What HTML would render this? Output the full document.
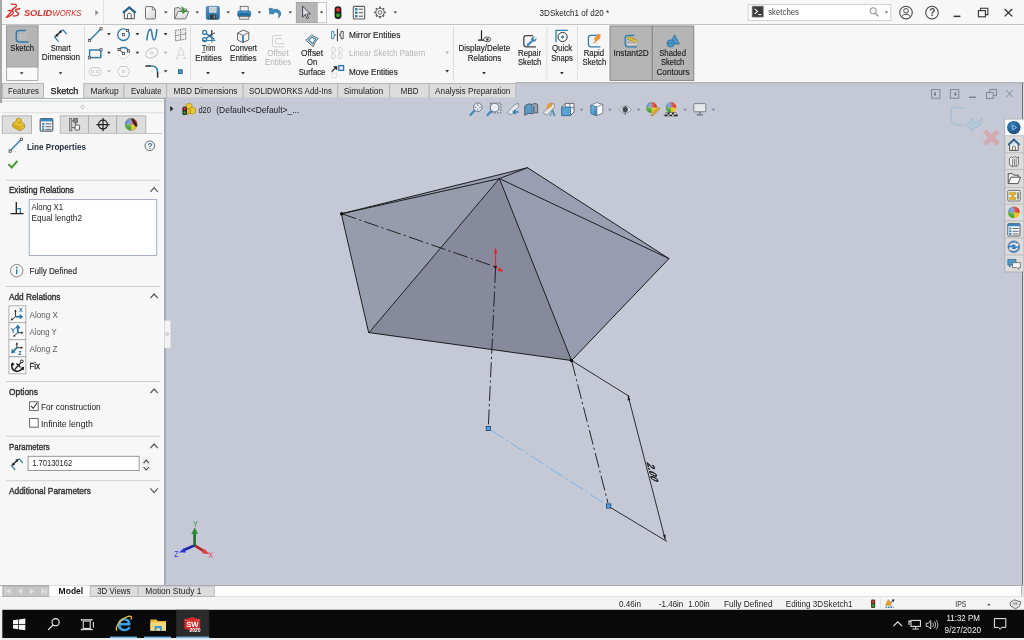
<!DOCTYPE html>
<html lang="en">
<head>
<meta charset="utf-8">
<title>SOLIDWORKS - 3DSketch1 of d20</title>
<style>
*{box-sizing:border-box;margin:0;padding:0}
html,body{width:1024px;height:640px;overflow:hidden;background:#f7f7f7}
body{font-family:"Liberation Sans",sans-serif;font-size:9px;color:#222;position:relative}
.abs{position:absolute}
svg{will-change:transform}
.t{position:absolute;white-space:nowrap;line-height:11px;font-size:9px;color:#222}
.c{text-align:center}
.dis{color:#b4b4b4}
#titlebar{left:0;top:0;width:1024px;height:24px;background:#f7f7f7}
#ribbon{left:0;top:25px;width:1024px;height:57px;background:#f7f7f7}
#tabs{left:0;top:82px;width:1024px;height:16px;background:#c5c9d5}
.tab{position:absolute;top:1px;height:15px;background:#dddddd;border:1px solid #b9b9b9;border-bottom:none;font-size:9.5px;line-height:14px;text-align:center;color:#222;white-space:nowrap}
.tab.on{background:#f7f7f7;border-color:#f7f7f7;top:0;height:16px}
#left{left:0;top:98px;width:164.3px;height:487px;background:#f7f7f7}
#view{left:165.6px;top:98px;width:858.4px;height:487px;background:#c5c9d5}
#btabs{left:0;top:585px;width:1024px;height:12px;background:#f5f5f5}
#status{left:0;top:597px;width:1024px;height:13px;background:#f5f5f5}
#taskbar{left:0;top:610px;width:1024px;height:30px;background:#0b0b0b}
.sep{position:absolute;height:1px;background:#d0d0d0;left:6px;width:154px}
.sec{position:absolute;left:9px;font-size:9px;line-height:11px;color:#222;white-space:nowrap;-webkit-text-stroke:0.25px #222}
.chev{position:absolute;left:149px;width:9px;height:6px}
</style>
</head>
<body>
<!-- ======= TITLE BAR ======= -->
<div id="titlebar" class="abs"></div>
<svg class="abs" style="left:0;top:0.4px" width="1024" height="25" viewBox="0 0 1024 25">
<defs>
<linearGradient id="gDoc" x1="0" y1="0" x2="1" y2="1"><stop offset="0" stop-color="#ffffff"/><stop offset="1" stop-color="#d4d4d4"/></linearGradient>
<linearGradient id="gBlue" x1="0" y1="0" x2="0" y2="1"><stop offset="0" stop-color="#4a9acb"/><stop offset="1" stop-color="#226a9c"/></linearGradient>
</defs>
<style>
.s{font-family:"Liberation Sans",sans-serif;font-size:9.3px;fill:#222}
.ar{fill:#333}
</style>
<!-- DS logo -->
<g fill="none" stroke="#da2f2a" stroke-linecap="round" stroke-linejoin="round">
<path d="M11.2,4.1 L15.2,4.3 C17.2,4.7 16.6,6.9 14.6,7.9 L12.4,9.1" stroke-width="1.3"/>
<path d="M13.2,9.6 L6.2,17.4 M8.2,10.7 C12,10 14.2,11.4 13,13.4 C11.6,15.4 8.8,16.8 6.2,17.4" stroke-width="1.3"/>
<path d="M19.8,8.8 L16.8,9.2 C15,9.8 15.4,11.3 16.8,11.9 C18.8,12.7 19.2,14.6 17.2,15.4 C16,15.8 14.8,16 13.6,16" stroke-width="1.5"/>
</g>
<text y="16.1" font-family="Liberation Sans, sans-serif" font-size="9.2" font-style="italic" fill="#da2f2a"><tspan x="23.9" textLength="28.3" lengthAdjust="spacingAndGlyphs" font-weight="bold">SOLID</tspan><tspan x="52.4" textLength="29" lengthAdjust="spacingAndGlyphs">WORKS</tspan></text>
<path d="M95.3,9.8 L98.7,12.7 L95.3,15.6 Z" fill="#8c8c8c"/>
<rect x="103" y="0" width="1" height="24" fill="#e3e3e3"/>
<!-- home -->
<path d="M124.3,12.6 L124.3,18.7 L134.3,18.7 L134.3,12.6" fill="#fafafa" stroke="#4a4a4a" stroke-width="1"/>
<path d="M127.4,18.7 L127.4,14.4 C127.4,13 131.2,13 131.2,14.4 L131.2,18.7" fill="none" stroke="#4a4a4a" stroke-width="0.9"/>
<path d="M122.9,12.8 L129.3,7.4 L135.7,12.8" fill="none" stroke="#27638f" stroke-width="2.3" stroke-linejoin="miter"/>
<!-- new doc -->
<path d="M146.6,6.6 L152.6,6.6 L155.5,9.6 L155.5,17.8 Q155.5,19 154.3,19 L146.6,19 Q145.5,19 145.5,17.8 L145.5,7.8 Q145.5,6.6 146.6,6.6 Z" fill="url(#gDoc)" stroke="#6e6e6e" stroke-width="1"/>
<path d="M152.4,6.8 L152.4,9.8 L155.4,9.8" fill="none" stroke="#6e6e6e" stroke-width="0.8"/>
<path class="ar" d="M164,11.4 L167.6,11.4 L165.8,13.6 Z"/>
<!-- open -->
<path d="M174.6,18.8 L174.6,8.2 L179,7.4 L180.2,9 L186.5,9 L186.5,11.6" fill="#dcdcdc" stroke="#6a6a6a" stroke-width="0.9"/>
<path d="M174.8,18.9 L178.2,11.4 L188.8,11.4 L185.6,18.9 Z" fill="url(#gDoc)" stroke="#6a6a6a" stroke-width="0.9"/>
<path d="M180.6,6.2 C183,6.4 184.4,8 184.4,10.2 L186.6,10.2 L183.4,14 L180.2,10.2 L182.4,10.2 C182.4,8.6 181.8,7.4 180.6,6.2 Z" fill="#2f9a2a"/>
<path class="ar" d="M195.4,11.4 L199,11.4 L197.2,13.6 Z"/>
<!-- save -->
<rect x="206.3" y="6.4" width="13" height="13" rx="1.4" fill="url(#gBlue)" stroke="#1f5f8c" stroke-width="0.6"/>
<rect x="209" y="6.9" width="7.6" height="5.8" fill="#d9dde0"/>
<path d="M209,8.8 H216.6 M209,10.6 H216.6" stroke="#aab0b5" stroke-width="0.6"/>
<rect x="210" y="14.6" width="6" height="4.6" fill="#3b3b3b"/>
<rect x="213.6" y="15.4" width="1.5" height="3" fill="#8b8b8b"/>
<path class="ar" d="M226.4,11.4 L230,11.4 L228.2,13.6 Z"/>
<!-- print -->
<rect x="240.2" y="6.4" width="8" height="5.2" fill="#f1f1f1" stroke="#6a6a6a" stroke-width="0.9"/>
<rect x="237.7" y="10.8" width="13" height="6" rx="1.6" fill="url(#gBlue)" stroke="#1f5f8c" stroke-width="0.5"/>
<rect x="239" y="13.6" width="10.4" height="1" fill="#1b557f"/>
<rect x="239.6" y="16.4" width="9.2" height="2.8" fill="#e2e2e2" stroke="#6a6a6a" stroke-width="0.8"/>
<path class="ar" d="M257.6,11.4 L261.2,11.4 L259.4,13.6 Z"/>
<!-- undo -->
<path d="M269.2,8.2 L272.6,8.6 L271.8,10 C275.6,8 281.2,9.6 280.8,14.2 C280.6,16 279.6,17 278.2,17.8 C279.4,15.6 279,12.4 275.4,12.2 C274.4,12.2 273.6,12.4 273,12.8 L274.2,14 L269.6,13.8 Z" fill="#3a8cc0" stroke="#1f5f8c" stroke-width="0.5" stroke-linejoin="round"/>
<path class="ar" d="M288.5,11.4 L292.1,11.4 L290.3,13.6 Z"/>
<!-- select -->
<rect x="296.3" y="2.5" width="21.2" height="20.2" fill="#b5b5b5" stroke="#9a9a9a" stroke-width="0.8"/>
<rect x="317.5" y="2.5" width="9" height="20.2" fill="#fafafa" stroke="#bdbdbd" stroke-width="0.8"/>
<path d="M302.6,6.2 L302.6,17 L305.2,14.6 L307,18.6 L308.6,17.9 L306.8,14 L310.4,13.8 Z" fill="#d8d8d8" stroke="#3c3c48" stroke-width="0.9" stroke-linejoin="round"/>
<path class="ar" d="M319.8,11.4 L323.4,11.4 L321.6,13.6 Z"/>
<!-- traffic light -->
<rect x="334.6" y="6.2" width="6.8" height="12.8" rx="3.2" fill="#1e1e1e"/>
<circle cx="338" cy="9.8" r="2" fill="#e2302a"/>
<circle cx="338" cy="15.3" r="2" fill="#2fa32a"/>
<!-- options list -->
<rect x="353.3" y="6.4" width="11.4" height="12.6" rx="1" fill="#f2f2f2" stroke="#5e5e5e" stroke-width="1.1"/>
<rect x="355" y="8" width="2.4" height="2.4" fill="#2f7fb3"/><rect x="355" y="11.5" width="2.4" height="2.4" fill="#2f7fb3"/><rect x="355" y="15" width="2.4" height="2.4" fill="#2f7fb3"/>
<path d="M358.6,9.2 H363 M358.6,12.7 H363 M358.6,16.2 H363" stroke="#5e5e5e" stroke-width="1"/>
<!-- gear -->
<circle cx="380" cy="12.4" r="4.2" fill="none" stroke="#5a5a5a" stroke-width="1"/>
<circle cx="380" cy="12.4" r="1.8" fill="none" stroke="#5a5a5a" stroke-width="0.9"/>
<g stroke="#606060" stroke-width="1.8"><path d="M380,6.6 V8.2 M380,16.6 V18.2 M374.2,12.4 H375.8 M384.2,12.4 H385.8 M375.9,8.3 L377,9.4 M383,15.4 L384.1,16.5 M384.1,8.3 L383,9.4 M377,15.4 L375.9,16.5"/></g>
<path class="ar" d="M393.5,11.4 L397.1,11.4 L395.3,13.6 Z"/>
<!-- title -->
<text class="s" x="539.6" y="16" textLength="69.6" lengthAdjust="spacingAndGlyphs" style="font-size:9.2px">3DSketch1 of d20 *</text>
<!-- search -->
<rect x="748.2" y="4.6" width="142.6" height="15.8" fill="#ffffff" stroke="#c9c9d2" stroke-width="0.9"/>
<rect x="752.2" y="6.2" width="11" height="10.8" fill="#3a3a3a" stroke="#777" stroke-width="0.8"/>
<path d="M754.6,8.8 L757.6,11.4 L754.6,14" fill="none" stroke="#fff" stroke-width="1.1"/>
<path d="M758.2,14.6 H761.4" stroke="#fff" stroke-width="1"/>
<text class="s" x="768.2" y="15.2" textLength="30.8" lengthAdjust="spacingAndGlyphs" style="fill:#444">sketches</text>
<circle cx="873.2" cy="10.8" r="3.1" fill="none" stroke="#8a8a8a" stroke-width="1"/>
<path d="M875.4,13.2 L878.4,16.4" stroke="#8a8a8a" stroke-width="1.3"/>
<path d="M884.6,11.6 L888.2,11.6 L886.4,13.6 Z" fill="#666"/>
<!-- user -->
<circle cx="906" cy="12.6" r="6.3" fill="none" stroke="#4a4a4a" stroke-width="1.1"/>
<circle cx="906" cy="10.8" r="2.3" fill="none" stroke="#4a4a4a" stroke-width="1"/>
<path d="M901.8,16.6 C902.6,13.6 909.4,13.6 910.2,16.6" fill="none" stroke="#4a4a4a" stroke-width="1"/>
<!-- help -->
<circle cx="932" cy="12.6" r="6.3" fill="none" stroke="#4a4a4a" stroke-width="1.1"/>
<text x="929.3" y="16.2" font-family="Liberation Sans, sans-serif" font-size="10" font-weight="bold" fill="#4a4a4a">?</text>
<!-- window buttons -->
<rect x="953.6" y="15.6" width="6.8" height="1.5" fill="#333"/>
<rect x="978.4" y="10.6" width="7" height="6.2" fill="none" stroke="#333" stroke-width="1.1"/>
<path d="M980.6,10.4 V8.2 H987.8 V14.6 H985.6" fill="none" stroke="#333" stroke-width="1.1"/>
<path d="M1004.6,9 L1012.2,16.4 M1012.2,9 L1004.6,16.4" stroke="#333" stroke-width="1.3"/>
</svg>
<div class="abs" style="left:0;top:23.8px;width:1024px;height:1.2px;background:#c4c4c4"></div>
<!-- ======= RIBBON ======= -->
<div id="ribbon" class="abs"></div>
<svg class="abs" style="left:0;top:24px" width="1024" height="58" viewBox="0 24 1024 58">
<style>
.r{font-family:"Liberation Sans",sans-serif;font-size:8.6px;fill:#1e1e1e;stroke:#1e1e1e;stroke-width:0.15px;transform:translateY(0.4px)}
.rd{font-family:"Liberation Sans",sans-serif;font-size:8.6px;fill:#b4b4b4;transform:translateY(0.4px)}
.ag{fill:#b0b0b0}
.vs{fill:#dedede}
</style>
<rect class="vs" x="84.0" y="26" width="1" height="54"/>
<rect class="vs" x="190.0" y="26" width="1" height="54"/>
<rect class="vs" x="453.0" y="26" width="1" height="54"/>
<rect class="vs" x="546.3" y="26" width="1" height="54"/>
<rect class="vs" x="577.0" y="26" width="1" height="54"/>
<rect x="6.6" y="26" width="31.3" height="54.4" fill="#fafafa" stroke="#a2a2a2" stroke-width="0.9"/>
<rect x="6.6" y="26" width="31.3" height="41" fill="#b5b5b5" stroke="#9a9a9a" stroke-width="0.9"/>
<path d="M21,33 V40.5 M25,33 V40.5 M18.5,35.5 H28 M18.5,38.5 H28" stroke="#c2c2c2" stroke-width="0.7" fill="none"/>
<path d="M26,30.6 H19.4 Q16.3,30.6 16.3,33.6 V38.8 Q16.3,41.9 19.4,41.9 H28.6" fill="none" stroke="#2e7fae" stroke-width="1.5"/>
<text class="r" x="10.3" y="51.1" textLength="23.7" lengthAdjust="spacingAndGlyphs">Sketch</text>
<path class="ar" d="M19.8,72.2 L23.6,72.2 L21.7,74.5 Z"/>
<path d="M58.6,41.6 L54.6,37 L57.2,34.6 M61.2,31 L63.2,30 L66.6,34.2" fill="none" stroke="#2e7fae" stroke-width="1.3"/>
<path d="M56.6,35.6 L60.8,31.4" stroke="#222" stroke-width="1.4"/><path d="M55.4,36.8 L56.2,33.8 L58.6,36.2 Z M62,30.2 L61.2,33.2 L58.9,30.9 Z" fill="#222"/>
<text class="r" x="50.8" y="51.1" textLength="20.0" lengthAdjust="spacingAndGlyphs">Smart</text>
<text class="r" x="41.8" y="60.1" textLength="38.2" lengthAdjust="spacingAndGlyphs">Dimension</text>
<path class="ar" d="M58.6,72.2 L62.4,72.2 L60.5,74.5 Z"/>
<path d="M89.6,40.2 L100.8,29" stroke="#2e7fae" stroke-width="1.5"/><rect x="88.3" y="39.3" width="2.2" height="2.2" fill="#f4f4f4" stroke="#333" stroke-width="0.7"/><rect x="99.9" y="27.7" width="2.2" height="2.2" fill="#f4f4f4" stroke="#333" stroke-width="0.7"/>
<path class="ar" d="M107.0,33.1 L110.8,33.1 L108.9,35.4 Z"/>
<circle cx="123.5" cy="34.7" r="5.8" fill="none" stroke="#2e7fae" stroke-width="1.4"/><rect x="122.4" y="33.6" width="2.2" height="2.2" fill="#f4f4f4" stroke="#333" stroke-width="0.7"/><rect x="126.5" y="29.4" width="2.2" height="2.2" fill="#f4f4f4" stroke="#333" stroke-width="0.7"/>
<path class="ar" d="M135.5,33.1 L139.3,33.1 L137.4,35.4 Z"/>
<path d="M146.8,40.4 C147.4,34 148.6,29.4 150.4,29.4 C152.6,29.4 151.6,40 154,40 C155.8,40 156.4,34 157,29" fill="none" stroke="#2e7fae" stroke-width="1.6"/>
<path class="ar" d="M163.7,33.1 L167.5,33.1 L165.6,35.4 Z"/>
<path d="M175.4,30.4 L185.8,28.6 V39.2 L175.4,41 Z M180.6,29.2 V40.4 M175.4,35.6 L185.8,33.8" fill="#ececec" stroke="#555" stroke-width="0.8" stroke-dasharray="1.4 0.9"/>
<rect x="89.6" y="50" width="11.2" height="7.6" fill="none" stroke="#2e7fae" stroke-width="1.5"/><rect x="88.3" y="56.7" width="2.2" height="2.2" fill="#f4f4f4" stroke="#333" stroke-width="0.7"/><rect x="99.9" y="48.7" width="2.2" height="2.2" fill="#f4f4f4" stroke="#333" stroke-width="0.7"/>
<path class="ar" d="M107.0,51.7 L110.8,51.7 L108.9,54.0 Z"/>
<path d="M119,49.6 C121,46.6 126.6,46.6 128.6,50.8" fill="none" stroke="#2e7fae" stroke-width="1.3"/><path d="M119,49.6 L123.6,53.4" stroke="#333" stroke-width="0.9"/><path d="M118.4,55 C119.6,60 127.6,60 129,54.6" fill="none" stroke="#bdbdbd" stroke-width="0.9" stroke-dasharray="1.3 1.3"/><rect x="117.9" y="48.5" width="2.2" height="2.2" fill="#f4f4f4" stroke="#333" stroke-width="0.7"/><rect x="122.5" y="52.3" width="2.2" height="2.2" fill="#f4f4f4" stroke="#333" stroke-width="0.7"/><rect x="127.5" y="49.9" width="2.2" height="2.2" fill="#f4f4f4" stroke="#333" stroke-width="0.7"/>
<path class="ar" d="M135.5,51.7 L139.3,51.7 L137.4,54.0 Z"/>
<ellipse cx="151.8" cy="53" rx="6.4" ry="4.6" transform="rotate(-28 151.8 53)" fill="none" stroke="#c6c6c6" stroke-width="1.1"/><rect x="150.7" y="51.9" width="2.2" height="2.2" fill="#f4f4f4" stroke="#c6c6c6" stroke-width="0.7"/>
<path class="ag" d="M163.7,51.7 L167.5,51.7 L165.6,54.0 Z"/>
<path d="M175.4,58.6 H179 M182.4,58.6 H186.4 M176.8,58.6 L180.4,47.6 H181.6 L185,58.6 M178.2,55 H183.8" fill="none" stroke="#cfcfcf" stroke-width="0.8"/>
<rect x="89" y="67.6" width="12.2" height="8" rx="4" fill="none" stroke="#cbcbcb" stroke-width="1"/><rect x="91.5" y="70.5" width="2.2" height="2.2" fill="#f4f4f4" stroke="#cbcbcb" stroke-width="0.7"/><rect x="96.5" y="70.5" width="2.2" height="2.2" fill="#f4f4f4" stroke="#cbcbcb" stroke-width="0.7"/>
<path class="ag" d="M107.0,70.2 L110.8,70.2 L108.9,72.5 Z"/>
<path d="M117.4,71.5 L120.5,66.5 H126.7 L129.8,71.5 L126.7,76.5 H120.5 Z" fill="none" stroke="#cbcbcb" stroke-width="1"/><rect x="122.5" y="70.4" width="2.2" height="2.2" fill="#f4f4f4" stroke="#cbcbcb" stroke-width="0.7"/>
<path d="M145.4,66 H151.6" stroke="#3a3a3a" stroke-width="1.6"/><path d="M151.6,66 Q157.6,66 157.6,72" fill="none" stroke="#2e7fae" stroke-width="1.6"/><path d="M157.6,72 V77.6" stroke="#3a3a3a" stroke-width="1.6"/><path d="M150.8,70.6 L152.8,72.6 M152.8,70.6 L150.8,72.6" stroke="#cfcfcf" stroke-width="0.6"/>
<path class="ar" d="M163.7,70.2 L167.5,70.2 L165.6,72.5 Z"/>
<rect x="178.4" y="69.8" width="3.8" height="3.8" fill="#4a9acb" stroke="#1f5f8c" stroke-width="0.9"/>
<g fill="none" stroke="#2a77a6" stroke-width="1.3"><circle cx="204.6" cy="32.4" r="2"/><circle cx="204.6" cy="39.6" r="2"/><path d="M206.2,33.6 L214.4,39.4 M206.2,38.4 L211,35"/></g><path d="M211.8,30 V42.6 M202,40.4 H215.4" stroke="#2a77a6" stroke-width="1"/><path d="M211.8,30 V35.6 M209,35.6 L215,32.8" stroke="#333" stroke-width="0.9"/>
<text class="r" x="202" y="51" textLength="13.3" lengthAdjust="spacingAndGlyphs">Trim</text>
<rect x="202" y="51.9" width="3.6" height="0.7" fill="#1e1e1e"/>
<text class="r" x="195.2" y="60.2" textLength="26.5" lengthAdjust="spacingAndGlyphs">Entities</text>
<path class="ar" d="M206.1,72.1 L209.9,72.1 L208.0,74.4 Z"/>
<path d="M237.6,33 L243.4,30 L248.8,32.4 V39.8 L243,42.6 L237.6,40 Z" fill="#f4f4f4" stroke="#555" stroke-width="0.9" stroke-linejoin="round"/><path d="M237.6,33 L243,35.4 L248.8,32.4 M243,35.4 V42.6" fill="none" stroke="#555" stroke-width="0.8"/><path d="M243,35.4 V42.4" stroke="#2e7fae" stroke-width="1.6"/>
<text class="r" x="229.7" y="51" textLength="27.3" lengthAdjust="spacingAndGlyphs">Convert</text>
<text class="r" x="230" y="60.2" textLength="26.6" lengthAdjust="spacingAndGlyphs">Entities</text>
<path class="ar" d="M241.1,72.1 L244.9,72.1 L243.0,74.4 Z"/>
<path d="M281.6,35.4 H274.6 Q272.4,35.4 272.4,37.6 V44.6 Q272.4,46.8 274.6,46.8 H284.4 M281.6,38.6 H276.6 Q275.6,38.6 275.6,39.6 V42.8 Q275.6,43.8 276.6,43.8 H284.4" fill="none" stroke="#cdcdcd" stroke-width="1"/>
<text class="rd" x="267.3" y="55.9" textLength="21.4" lengthAdjust="spacingAndGlyphs">Offset</text>
<text class="rd" x="265" y="65" textLength="26.2" lengthAdjust="spacingAndGlyphs">Entities</text>
<path d="M305.8,40.2 L311.6,35 L318.4,38.6 C316,40.6 314,43.4 313.4,46.8 Z" fill="#dfe8ee" stroke="#555" stroke-width="0.9" stroke-linejoin="round"/><path d="M308.6,40.2 L311.8,37.2 L315.8,39.2 C314.4,40.6 313.4,42 312.8,43.8 Z" fill="#f6f6f6" stroke="#2e7fae" stroke-width="1.1" stroke-linejoin="round"/>
<text class="r" x="301" y="55.9" textLength="22.0" lengthAdjust="spacingAndGlyphs">Offset</text>
<text class="r" x="307" y="65" textLength="10.2" lengthAdjust="spacingAndGlyphs">On</text>
<text class="r" x="298.7" y="74.3" textLength="26.7" lengthAdjust="spacingAndGlyphs">Surface</text>
<path d="M337.4,28.8 V41.2" stroke="#333" stroke-width="1"/><path d="M331.6,31.4 H333.8 V34 L335.8,35 L333.8,36 V38.8 H331.6 Z" fill="none" stroke="#2e7fae" stroke-width="0.9"/><path d="M343.2,31.4 H341 V34 L339,35 L341,36 V38.8 H343.2 Z" fill="none" stroke="#444" stroke-width="0.9"/>
<text class="r" x="349" y="37.7" textLength="51.4" lengthAdjust="spacingAndGlyphs">Mirror Entities</text>
<path d="M332,47.6 H334.6 L335.8,50 L334.2,52.4 H332 Z M338.8,47.6 H341.4 L342.6,50 L341,52.4 H338.8 Z M332,53.8 H334.6 L335.8,56.2 L334.2,58.6 H332 Z M338.8,53.8 H341.4 L342.6,56.2 L341,58.6 H338.8 Z" fill="none" stroke="#d0d0d0" stroke-width="0.9"/>
<text class="rd" x="349" y="56.1" textLength="76.3" lengthAdjust="spacingAndGlyphs">Linear Sketch Pattern</text>
<path class="ag" d="M445.3,51.6 L449.1,51.6 L447.2,53.9 Z"/>
<rect x="338.8" y="65.6" width="4.8" height="4.8" fill="#dfeef6" stroke="#2a77a6" stroke-width="1.3"/><path d="M331.8,71.6 L336,67.4" stroke="#222" stroke-width="1.3"/><path d="M333,66.2 H337.2 V70.4 Z" fill="#222"/><rect x="331.8" y="73" width="4.8" height="4.6" fill="none" stroke="#c4c4c4" stroke-width="0.8" stroke-dasharray="1 1"/>
<text class="r" x="349" y="74.3" textLength="48.7" lengthAdjust="spacingAndGlyphs">Move Entities</text>
<path class="ar" d="M445.3,70.1 L449.1,70.1 L447.2,72.4 Z"/>
<path d="M481.5,30.2 V40.1 M478,40.1 H485.4" stroke="#222" stroke-width="1.2" fill="none"/><ellipse cx="487.2" cy="39.4" rx="3.6" ry="2.4" fill="#f4f4f4" stroke="#333" stroke-width="0.8"/><circle cx="487.4" cy="39.5" r="1.3" fill="#333"/>
<text class="r" x="458.5" y="51" textLength="51.7" lengthAdjust="spacingAndGlyphs">Display/Delete</text>
<text class="r" x="467.8" y="60.2" textLength="33.5" lengthAdjust="spacingAndGlyphs">Relations</text>
<path class="ar" d="M482.1,72.1 L485.9,72.1 L484.0,74.4 Z"/>
<path d="M533,35.6 H526.4 Q523.8,35.6 523.8,38.2 V44 Q523.8,46.8 526.4,46.8 H536" fill="none" stroke="#444" stroke-width="1.3"/><path d="M526.6,44.8 L531.6,40.2 C531,38.4 532.4,36.6 534.6,36.8 L533,38.6 L534.4,40 L536.2,38.4 C536.4,40.6 534.6,42 532.8,41.4 L528,46.2 Z" fill="#3a8cc0" stroke="#27638f" stroke-width="0.4"/>
<text class="r" x="518" y="55.9" textLength="23.0" lengthAdjust="spacingAndGlyphs">Repair</text>
<text class="r" x="518" y="65" textLength="23.3" lengthAdjust="spacingAndGlyphs">Sketch</text>
<path d="M556,42.2 V30.4 H567.8" fill="none" stroke="#2e7fae" stroke-width="1.3"/><circle cx="562.6" cy="37" r="4.6" fill="none" stroke="#333" stroke-width="1"/><circle cx="562.6" cy="37" r="1.4" fill="#2e7fae"/>
<text class="r" x="552" y="51" textLength="20.1" lengthAdjust="spacingAndGlyphs">Quick</text>
<text class="r" x="551.2" y="60.2" textLength="21.5" lengthAdjust="spacingAndGlyphs">Snaps</text>
<path class="ar" d="M560.0,72.1 L563.8,72.1 L561.9,74.4 Z"/>
<path d="M598,35.4 H591 Q588.4,35.4 588.4,38 V44 Q588.4,46.8 591,46.8 H600.4" fill="none" stroke="#2e7fae" stroke-width="1.3"/><path d="M590.4,40 H598 M590.4,43 H598 M593,37.4 V45 M596,37.4 V45" stroke="#e2e2e2" stroke-width="0.6"/><path d="M597.6,34.6 L600.6,34.8 L598.6,37.6 L600.4,37.8 L594,43 L596,39.2 L594.2,39 Z" fill="#f0a020" stroke="#d8541c" stroke-width="0.5" stroke-linejoin="round"/>
<text class="r" x="583.7" y="55.9" textLength="20.5" lengthAdjust="spacingAndGlyphs">Rapid</text>
<text class="r" x="582.6" y="65" textLength="23.6" lengthAdjust="spacingAndGlyphs">Sketch</text>
<rect x="610" y="26" width="42.3" height="54.4" fill="#b5b5b5" stroke="#808080" stroke-width="0.9"/>
<rect x="652.3" y="26" width="41.5" height="54.4" fill="#b5b5b5" stroke="#808080" stroke-width="0.9"/>
<path d="M634.6,35.4 H627.8 Q625.2,35.4 625.2,38 V44 Q625.2,46.8 627.8,46.8 H637" fill="none" stroke="#2e7fae" stroke-width="1.3"/><path d="M627.2,44.4 H636 L636,41" fill="none" stroke="#e8e8e8" stroke-width="0.8"/><path d="M627.4,38.6 L629,36.2 L637,40.2 L635.6,42.8 Z" fill="#e8c93a" stroke="#8a7420" stroke-width="0.5"/><path d="M630.4,37.2 L629.8,38.4 M632.4,38.2 L631.8,39.4 M634.4,39.2 L633.8,40.4" stroke="#6b5a18" stroke-width="0.5"/>
<text class="r" x="613.5" y="55.9" textLength="35.2" lengthAdjust="spacingAndGlyphs">Instant2D</text>
<path d="M674.6,34.8 L679.4,44 H670 Z" fill="#4a9acb" stroke="#27638f" stroke-width="0.7" stroke-linejoin="round"/><circle cx="670.6" cy="43.4" r="3.6" fill="#4a9acb" stroke="#27638f" stroke-width="0.7"/><path d="M667,43.4 H672.6" stroke="#27638f" stroke-width="0.6"/>
<text class="r" x="659.2" y="55.9" textLength="26.8" lengthAdjust="spacingAndGlyphs">Shaded</text>
<text class="r" x="661" y="65" textLength="23.2" lengthAdjust="spacingAndGlyphs">Sketch</text>
<text class="r" x="656.4" y="74.3" textLength="33.3" lengthAdjust="spacingAndGlyphs">Contours</text>
</svg>
<!-- ======= COMMAND TABS ======= -->
<div id="tabs" class="abs"></div>
<svg class="abs" style="left:0;top:82px" width="1024" height="17" viewBox="0 82 1024 17">
<style>.tb{font-family:"Liberation Sans",sans-serif;font-size:9.6px;fill:#222;transform:translateY(0.5px)}</style>
<rect x="0" y="82" width="516" height="1.4" fill="#f7f7f7"/><rect x="515.7" y="81.8" width="508.3" height="1.6" fill="#b2b4ba"/>
<rect x="2.6" y="83.6" width="40.9" height="14.6" fill="#dcdcdc" stroke="#b4b4b4" stroke-width="0.9"/>
<text class="tb" x="7.9" y="93.4" textLength="31.1" lengthAdjust="spacingAndGlyphs">Features</text>
<rect x="44.0" y="82" width="39.4" height="16.2" fill="#f8f8f8"/>
<text class="tb" x="50.6" y="93.4" textLength="27.7" lengthAdjust="spacingAndGlyphs" style="fill:#111;stroke:#111;stroke-width:0.25px">Sketch</text>
<rect x="83.9" y="83.6" width="40.1" height="14.6" fill="#dcdcdc" stroke="#b4b4b4" stroke-width="0.9"/>
<text class="tb" x="90.5" y="93.4" textLength="28.2" lengthAdjust="spacingAndGlyphs">Markup</text>
<rect x="124" y="83.6" width="42.7" height="14.6" fill="#dcdcdc" stroke="#b4b4b4" stroke-width="0.9"/>
<text class="tb" x="131" y="93.4" textLength="30.7" lengthAdjust="spacingAndGlyphs">Evaluate</text>
<rect x="166.7" y="83.6" width="76.5" height="14.6" fill="#dcdcdc" stroke="#b4b4b4" stroke-width="0.9"/>
<text class="tb" x="173.6" y="93.4" textLength="63.8" lengthAdjust="spacingAndGlyphs">MBD Dimensions</text>
<rect x="243.2" y="83.6" width="94.6" height="14.6" fill="#dcdcdc" stroke="#b4b4b4" stroke-width="0.9"/>
<text class="tb" x="249" y="93.4" textLength="83.0" lengthAdjust="spacingAndGlyphs">SOLIDWORKS Add-Ins</text>
<rect x="337.8" y="83.6" width="51.9" height="14.6" fill="#dcdcdc" stroke="#b4b4b4" stroke-width="0.9"/>
<text class="tb" x="343.7" y="93.4" textLength="39.6" lengthAdjust="spacingAndGlyphs">Simulation</text>
<rect x="389.7" y="83.6" width="39.5" height="14.6" fill="#dcdcdc" stroke="#b4b4b4" stroke-width="0.9"/>
<text class="tb" x="400.8" y="93.4" textLength="17.6" lengthAdjust="spacingAndGlyphs">MBD</text>
<rect x="429.2" y="83.6" width="86.5" height="14.6" fill="#dcdcdc" stroke="#b4b4b4" stroke-width="0.9"/>
<text class="tb" x="435.1" y="93.4" textLength="75.3" lengthAdjust="spacingAndGlyphs">Analysis Preparation</text>
<rect x="0" y="98" width="164.4" height="0.9" fill="#8ea2a8"/>
</svg>
<!-- ======= LEFT PANEL ======= -->
<div id="left" class="abs"></div>
<div class="abs" style="left:164.2px;top:98px;width:1.5px;height:487px;background:#a7abb4"></div>
<svg class="abs" style="left:0;top:98px" width="172" height="487" viewBox="0 98 172 487">
<defs>
<radialGradient id="gBall" cx="0.38" cy="0.32" r="0.5"><stop offset="0" stop-color="#ffffff" stop-opacity="0.4"/><stop offset="1" stop-color="#ffffff" stop-opacity="0"/></radialGradient>
</defs>
<style>
.p,.ph,.pg{transform:translateY(0.7px)}
.p{font-family:"Liberation Sans",sans-serif;font-size:9.2px;fill:#222}
.ph{font-family:"Liberation Sans",sans-serif;font-size:9.2px;fill:#2a2a2a;stroke:#2a2a2a;stroke-width:0.34px}
.pg{font-family:"Liberation Sans",sans-serif;font-size:9.2px;fill:#5c5c5c}
</style>
<rect x="0" y="98" width="164.4" height="0.9" fill="#8ea2a8"/><rect x="2" y="98.9" width="162" height="1.8" fill="#fdfdfd"/><rect x="2" y="100.6" width="162" height="0.9" fill="#d2d2d2"/><rect x="2" y="112.2" width="162" height="1" fill="#dcdcdc"/>
<circle cx="82.5" cy="107.1" r="1.7" fill="none" stroke="#b8b8b8" stroke-width="0.8"/>
<rect x="2.3" y="115.9" width="29.2" height="17.5" fill="#dddddd" stroke="#ababab" stroke-width="0.9"/>
<rect x="60.1" y="115.9" width="28.4" height="17.5" fill="#dddddd" stroke="#ababab" stroke-width="0.9"/>
<rect x="88.5" y="115.9" width="28.2" height="17.5" fill="#dddddd" stroke="#ababab" stroke-width="0.9"/>
<rect x="116.7" y="115.9" width="29.1" height="17.5" fill="#dddddd" stroke="#ababab" stroke-width="0.9"/>
<rect x="2" y="133" width="160" height="1" fill="#c6c6c6"/>
<rect x="32" y="115.4" width="27.6" height="19" fill="#f8f8f8"/>
<path d="M12.6,123.6 L16.2,121.2 L16.6,119 L19.4,118.2 L21.2,119.4 L21,122 L24.6,124.4 V127.6 L20,130.8 L12.6,126.8 Z" fill="#ecc530" stroke="#a88412" stroke-width="0.8" stroke-linejoin="round"/><path d="M12.8,123.8 L20,127.4 L24.4,124.6 M20,127.4 V130.6 M16.6,121.4 L19,122.6 L21,121.8 M19,122.6 V125" fill="none" stroke="#b8921a" stroke-width="0.7"/><path d="M13.4,124.6 L19.6,127.8 V130 L13.2,126.6 Z" fill="#d8a818"/>
<rect x="40.2" y="118.6" width="12.6" height="12.6" rx="1.2" fill="#f4f4f4" stroke="#56626e" stroke-width="1.2"/><rect x="40.4" y="118.8" width="12.2" height="2.6" fill="#3a86b8"/><rect x="42" y="123" width="2.4" height="1.8" fill="#3a86b8"/><rect x="42" y="125.8" width="2.4" height="1.8" fill="#3a86b8"/><rect x="42" y="128.4" width="2.4" height="1.8" fill="#3a86b8"/><path d="M45.6,123.9 H51.4 M45.6,126.7 H51.4 M45.6,129.3 H51.4" stroke="#56626e" stroke-width="1"/>
<rect x="69.6" y="118.6" width="2.2" height="12.2" fill="#b8b8b8" stroke="#666" stroke-width="0.7"/><path d="M71.8,120.8 H74 M71.8,127.6 H75" stroke="#555" stroke-width="0.9"/><rect x="73.8" y="118.6" width="3.8" height="4" fill="#8a8a8a" stroke="#555" stroke-width="0.7"/><path d="M75.6,122.6 V125" stroke="#555" stroke-width="0.9"/><rect x="75" y="125" width="4.6" height="5.2" rx="1.2" fill="#fafafa" stroke="#444" stroke-width="0.9"/>
<circle cx="103" cy="124.6" r="4.4" fill="none" stroke="#222" stroke-width="1.3"/><path d="M103,118 V131.2 M96.4,124.6 H109.6" stroke="#222" stroke-width="1.2"/>
<circle cx="131.2" cy="124.4" r="6.2" fill="#e9c22e"/><path d="M131.2,124.4 L131.2,118.2 A6.2,6.2 0 0 0 125,124.4 Z" fill="#3a78c8"/><path d="M131.2,124.4 L125,124.4 A6.2,6.2 0 0 0 131.2,130.6 Z" fill="#3fa43a"/><path d="M131.2,124.4 L131.2,118.2 A6.2,6.2 0 0 1 137.4,124.4 Z" fill="#d8342c"/><circle cx="131.2" cy="124.4" r="6.2" fill="url(#gBall)"/><path d="M132.6,119.4 L136.2,125.6" stroke="#222" stroke-width="2.2" stroke-linecap="round"/><circle cx="131.2" cy="124.4" r="6.2" fill="none" stroke="#8a8a8a" stroke-width="0.5"/>
<path d="M10.2,150.8 L21.2,139.4" stroke="#2e7fae" stroke-width="1.4"/><rect x="9" y="150" width="2.2" height="2.2" fill="#f4f4f4" stroke="#333" stroke-width="0.7"/><rect x="20.2" y="138.2" width="2.2" height="2.2" fill="#f4f4f4" stroke="#333" stroke-width="0.7"/>
<text class="p" x="26.9" y="149.1" textLength="59.1" lengthAdjust="spacingAndGlyphs" style="font-size:9.4px;font-weight:bold;fill:#1f2b3a">Line Properties</text>
<circle cx="149.8" cy="145.8" r="4.8" fill="#f8f8f8" stroke="#555" stroke-width="0.9"/><text x="147.4" y="148.8" style="font-family:'Liberation Sans',sans-serif;font-size:8.4px;font-weight:bold;fill:#2e7fae">?</text>
<path d="M8.4,164.2 L11.6,167.6 L17.4,161" fill="none" stroke="#3d9e2c" stroke-width="1.9"/>
<rect x="6" y="179.7" width="154" height="1" fill="#cfcfcf"/>
<text class="ph" x="8.9" y="192.7" textLength="65.0" lengthAdjust="spacingAndGlyphs">Existing Relations</text>
<path d="M150.4,191.8 L154.10000000000002,187.6 L157.8,191.8" fill="none" stroke="#555" stroke-width="1.2"/>
<path d="M16.3,202 V213.6 M10.6,213.7 H23.5" stroke="#222" stroke-width="1.3" fill="none"/><path d="M16.8,208.6 H20.4 V213" fill="none" stroke="#2e7fae" stroke-width="1.3"/>
<rect x="29.2" y="199.6" width="127.5" height="55.8" fill="#ffffff" stroke="#9ca3bd" stroke-width="0.9"/>
<text class="p" x="31.4" y="209" textLength="31.8" lengthAdjust="spacingAndGlyphs">Along X1</text>
<text class="p" x="31.4" y="220.5" textLength="50.7" lengthAdjust="spacingAndGlyphs">Equal length2</text>
<circle cx="16.7" cy="270.7" r="6.2" fill="#f8f8f8" stroke="#777" stroke-width="0.9"/><rect x="16" y="269.4" width="1.5" height="4.8" fill="#2e7fae"/><rect x="16" y="266.8" width="1.5" height="1.6" fill="#2e7fae"/>
<text class="ph" x="29.6" y="273.8" textLength="47.4" lengthAdjust="spacingAndGlyphs" style="stroke-width:0.15px">Fully Defined</text>
<rect x="6" y="286.0" width="154" height="1" fill="#cfcfcf"/>
<text class="ph" x="8.9" y="299.2" textLength="51.6" lengthAdjust="spacingAndGlyphs">Add Relations</text>
<path d="M150.4,298.2 L154.10000000000002,294 L157.8,298.2" fill="none" stroke="#555" stroke-width="1.2"/>
<rect x="8.9" y="305.8" width="16.9" height="17" fill="#f9f9f9" stroke="#a9a9a9" stroke-width="0.9"/>
<rect x="8.9" y="322.6" width="16.9" height="17" fill="#f9f9f9" stroke="#a9a9a9" stroke-width="0.9"/>
<rect x="8.9" y="339.7" width="16.9" height="17" fill="#f9f9f9" stroke="#a9a9a9" stroke-width="0.9"/>
<rect x="8.9" y="356.8" width="16.9" height="17" fill="#f9f9f9" stroke="#a9a9a9" stroke-width="0.9"/>
<path d="M15.5,316.7 V311 M15.5,316.7 L12,319.5" stroke="#222" stroke-width="0.9" fill="none"/><path d="M15.5,309.4 L14.2,311.6 H16.8 Z M10.8,320.4 L11.6,318 L13.2,319.9 Z" fill="#222"/><path d="M15.5,316.7 H20.4" stroke="#2a77a6" stroke-width="1.8"/><path d="M23.2,316.7 L19.8,313.8 V319.6 Z" fill="#2a77a6"/><text x="19" y="312.2" style="font-family:'Liberation Sans',sans-serif;font-size:6.8px;font-weight:bold;fill:#2a77a6">x</text>
<path d="M17.8,332.7 H21.6 M17.8,332.7 L14.4,335.7" stroke="#222" stroke-width="0.9" fill="none"/><path d="M23.6,332.7 L21.2,331.4 V334 Z M13.2,336.8 L14,334.4 L15.6,336.3 Z" fill="#222"/><path d="M17.8,333.2 V327.6" stroke="#2a77a6" stroke-width="1.8"/><path d="M17.8,324.6 L14.9,328.2 H20.7 Z" fill="#2a77a6"/><text x="10.8" y="333.2" style="font-family:'Liberation Sans',sans-serif;font-size:6.8px;font-weight:bold;fill:#2a77a6">Y</text>
<path d="M16.9,347.7 V344 M16.9,347.7 H21" stroke="#222" stroke-width="0.9" fill="none"/><path d="M16.9,342.2 L15.6,344.6 H18.2 Z M23.2,347.7 L20.8,346.4 V349 Z" fill="#222"/><path d="M17.2,347.4 L13.6,350.8" stroke="#2a77a6" stroke-width="1.8"/><path d="M11,353.2 L12,348.8 L15.6,352.4 Z" fill="#2a77a6"/><text x="18.2" y="354.6" style="font-family:'Liberation Sans',sans-serif;font-size:6.8px;font-weight:bold;fill:#2a77a6">z</text>
<path d="M12.4,363.4 C10.6,367.2 12.6,371 16.6,371.4 C19.6,371.4 21.8,369.6 22.8,367" fill="none" stroke="#1a1a1a" stroke-width="1.6"/><path d="M14.6,369.6 L20.8,362.6 M16.4,363.4 L20.6,367.2" stroke="#1a1a1a" stroke-width="1.4"/><circle cx="21.8" cy="361.4" r="1.4" fill="none" stroke="#1a1a1a" stroke-width="1"/><path d="M10.8,365.4 L12.6,362 L14.6,365 Z M20.8,368.6 L24.2,366.4 L23.6,370.4 Z" fill="#1a1a1a"/>
<text class="pg" x="29.6" y="317.3" textLength="28.3" lengthAdjust="spacingAndGlyphs">Along X</text>
<text class="pg" x="29.6" y="334.1" textLength="27.1" lengthAdjust="spacingAndGlyphs">Along Y</text>
<text class="pg" x="29.6" y="351" textLength="28.0" lengthAdjust="spacingAndGlyphs">Along Z</text>
<text class="ph" x="29.6" y="368" textLength="10.3" lengthAdjust="spacingAndGlyphs">Fix</text>
<rect x="6" y="381.0" width="154" height="1" fill="#cfcfcf"/>
<text class="ph" x="9" y="394" textLength="28.9" lengthAdjust="spacingAndGlyphs">Options</text>
<path d="M150.4,393.2 L154.10000000000002,389 L157.8,393.2" fill="none" stroke="#555" stroke-width="1.2"/>
<rect x="29.6" y="401.8" width="8.6" height="8.6" fill="#fff" stroke="#555" stroke-width="0.9"/><path d="M31,405.8 L33.2,408.4 L37.2,402.8" fill="none" stroke="#333" stroke-width="1.1"/>
<text class="p" x="40.9" y="409" textLength="59.8" lengthAdjust="spacingAndGlyphs">For construction</text>
<rect x="29.6" y="418.6" width="8.6" height="8.6" fill="#fff" stroke="#555" stroke-width="0.9"/>
<text class="p" x="40.9" y="425.9" textLength="51.9" lengthAdjust="spacingAndGlyphs">Infinite length</text>
<rect x="6" y="435.7" width="154" height="1" fill="#cfcfcf"/>
<text class="ph" x="9" y="449.4" textLength="40.7" lengthAdjust="spacingAndGlyphs">Parameters</text>
<path d="M150.4,448.2 L154.10000000000002,444 L157.8,448.2" fill="none" stroke="#555" stroke-width="1.2"/>
<path d="M15.2,470 L11.4,465.6 L13.6,463.6 M17.6,460 L19.4,459 L22.8,463" fill="none" stroke="#2e7fae" stroke-width="1.2"/><path d="M13.2,464.2 L17.2,460.2" stroke="#222" stroke-width="1.3"/><path d="M12,465.6 L12.8,462.6 L15.2,465 Z M18.4,459 L17.6,462 L15.3,459.7 Z" fill="#222"/>
<rect x="28.1" y="456.3" width="111" height="14.2" fill="#ffffff" stroke="#8c8c8c" stroke-width="0.9"/>
<text class="p" x="32.2" y="465.3" textLength="40.0" lengthAdjust="spacingAndGlyphs">1.70130162</text>
<rect x="142" y="457.6" width="8.6" height="13.6" fill="#efefef"/>
<path d="M143.6,463.2 L146.2,460.2 L148.8,463.2 M143.6,467 L146.2,470 L148.8,467" fill="none" stroke="#444" stroke-width="1.1"/>
<rect x="6" y="480.2" width="154" height="1" fill="#cfcfcf"/>
<text class="ph" x="9" y="493.4" textLength="81.9" lengthAdjust="spacingAndGlyphs">Additional Parameters</text>
<path d="M150.4,488.4 L154.10000000000002,492.6 L157.8,488.4" fill="none" stroke="#555" stroke-width="1.2"/>
</svg>
<!-- ======= VIEWPORT ======= -->
<div id="view" class="abs"></div>
<svg id="model" class="abs" style="left:0;top:0" width="1024" height="640" viewBox="0 0 1024 640">
<defs>
<linearGradient id="gF" x1="0" y1="0" x2="1" y2="0"><stop offset="0" stop-color="#858a99"/><stop offset="0.5" stop-color="#878a9c"/><stop offset="1" stop-color="#858999"/></linearGradient>
</defs>
<rect x="1022" y="83" width="1.3" height="502.5" fill="#6e6f74"/><rect x="1023.3" y="83" width="0.7" height="502.5" fill="#f2f2f2"/>
<!-- faces -->
<polygon points="341.7,213.7 499.4,178.6 527.5,167.7" fill="#9a9fb0"/>
<polygon points="341.7,213.7 499.4,178.6 369,332.6" fill="#969cab"/>
<polygon points="499.4,178.6 369,332.6 571.5,360.5" fill="url(#gF)"/>
<polygon points="499.4,178.6 571.5,360.5 669,258.6" fill="#979cb0"/>
<polygon points="499.4,178.6 527.5,167.7 669,258.6" fill="#999eb3"/>
<!-- edges -->
<g stroke="#1c1c20" stroke-width="1" fill="none" stroke-linecap="round" stroke-linejoin="round">
<path d="M341.7,213.7 L499.4,178.6 L369,332.6 Z"/>
<path d="M341.7,213.7 L527.5,167.7 L669,258.6 L571.5,360.5 L369,332.6"/>
<path d="M499.4,178.6 L571.5,360.5 M499.4,178.6 L669,258.6 M499.4,178.6 L527.5,167.7"/>
</g>
<!-- construction lines -->
<g stroke="#1c1c20" stroke-width="0.95" fill="none" stroke-dasharray="15 3.2 2.2 3.2">
<path d="M342,213.8 L495.6,266.9"/>
<path d="M495.6,268 L488.4,425"/>
<path d="M571.8,361.5 L608,503"/>
</g>
<path d="M491,430 L606,504.5" stroke="#7ab4ea" stroke-width="1" fill="none" stroke-dasharray="15 3.2 2.2 3.2"/>
<!-- dimension -->
<g stroke="#1c1c20" stroke-width="0.9" fill="none">
<path d="M572,360.8 L629.5,396.5"/>
<path d="M610.5,507.5 L667,541.5"/>
<path d="M628,395.4 L665.3,539.8"/>
</g>
<path d="M628,395.4 L627.6,400.6 L630.4,399.9 Z M665.3,539.8 L662.9,535.3 L665.7,534.6 Z" fill="#1c1c20"/>
<text transform="translate(646.8,462.6) rotate(75.5) skewX(-30)" font-family="Liberation Sans, sans-serif" font-size="9.4" font-style="italic" font-weight="bold" fill="#111" stroke="#111" stroke-width="0.25">2.00</text>
<!-- points -->
<circle cx="341.7" cy="213.7" r="1.7" fill="#000"/>
<circle cx="571.5" cy="360.5" r="1.7" fill="#000"/>
<circle cx="495.6" cy="266.9" r="1.4" fill="#111"/>
<rect x="486.2" y="426.4" width="4.2" height="4.2" fill="#4ea3ea" stroke="#1a3f6a" stroke-width="0.8"/>
<rect x="606.6" y="503.9" width="4.2" height="4.2" fill="#4ea3ea" stroke="#1a3f6a" stroke-width="0.8"/>
<!-- origin -->
<g stroke="#ee1c24" stroke-width="1" fill="#ee1c24">
<path d="M495.6,266.5 L495.6,252" fill="none"/>
<path d="M495.6,247.5 L493.9,253 L497.3,253 Z" stroke="none"/>
<path d="M496,267 L498.5,268.6" fill="none"/>
<path d="M503.4,271.4 L497.5,270.9 L499.6,267.4 Z" stroke="none"/>
</g>
<!-- triad -->
<g fill="none" stroke-linecap="butt">
<path d="M194.6,545.4 L203.4,550.8" stroke="#b8202a" stroke-width="2.6"/>
<path d="M209.4,554.3 L202,553.3 L204.6,549 Z" fill="#e0343c" stroke="none"/>
<path d="M194.6,545.4 L184,550" stroke="#1c22b4" stroke-width="2.6"/>
<path d="M178.8,552.4 L184,548 L186,552.4 Z" fill="#2a34e0" stroke="none"/>
<path d="M194.6,546.2 L194.6,533" stroke="#1c6e28" stroke-width="2.6"/>
<path d="M194.8,527.6 L191.3,534 L198.1,534 Z" fill="#2a8a38" stroke="none"/>
</g>
<text x="193" y="526.9" textLength="5" lengthAdjust="spacingAndGlyphs" font-family="Liberation Sans, sans-serif" font-size="8.8" fill="#3a9a4a">Y</text>
<text x="208.2" y="558.4" textLength="4.8" lengthAdjust="spacingAndGlyphs" font-family="Liberation Sans, sans-serif" font-size="8.8" fill="#e04858">X</text>
<text x="174.2" y="556.8" textLength="4.2" lengthAdjust="spacingAndGlyphs" font-family="Liberation Sans, sans-serif" font-size="8.8" fill="#3034e0">Z</text>
</svg>
<svg class="abs" style="left:0;top:82px" width="1024" height="300" viewBox="0 82 1024 300">
<defs>
<linearGradient id="gB2" x1="0" y1="0" x2="1" y2="1"><stop offset="0" stop-color="#8cc4e6"/><stop offset="1" stop-color="#2f7fb3"/></linearGradient>
<radialGradient id="gSh" cx="0.36" cy="0.3" r="0.55"><stop offset="0" stop-color="#fff" stop-opacity="0.42"/><stop offset="1" stop-color="#fff" stop-opacity="0"/></radialGradient>
<radialGradient id="gGlobe" cx="0.4" cy="0.35" r="0.75"><stop offset="0" stop-color="#3a86c0"/><stop offset="1" stop-color="#0d3a66"/></radialGradient>
</defs>
<style>.v{font-family:"Liberation Sans",sans-serif;font-size:9.2px;fill:#1a1a1a}</style>
<rect x="164.4" y="320.6" width="6.2" height="27.4" fill="#f3f3f3"/><path d="M166,320.6 H170.6 V348 H166" fill="none" stroke="#dadada" stroke-width="0.7"/><circle cx="167.2" cy="334.2" r="1.3" fill="none" stroke="#a8a8a8" stroke-width="0.7"/>
<path d="M170.2,106 L173.4,108.7 L170.2,111.4 Z" fill="#222"/>
<g stroke="#9a7b14" stroke-width="0.6" stroke-linejoin="round"><path d="M186,104.6 L189,103 L192,104.4 V108 L189,109.6 L186,108.2 Z" fill="#ecc830"/><path d="M189,108.6 L192.4,107 L195.4,108.6 V112.6 L192.2,114.4 L189,112.8 Z" fill="#ecc830"/><path d="M185.4,109.6 L188,108.4 L190.4,109.6 V113 L188,114.4 L185.4,113 Z" fill="#e4bc28"/></g>
<rect x="182.4" y="106.6" width="4.6" height="8.4" rx="1.6" fill="#2a2a2a"/><circle cx="184.7" cy="108.8" r="1.3" fill="#e2302a"/><circle cx="184.7" cy="112.6" r="1.3" fill="#2fa32a"/>
<text class="v" x="198.4" y="112.8" textLength="12.5" lengthAdjust="spacingAndGlyphs">d20</text>
<text class="v" x="216.3" y="112.8" textLength="82.9" lengthAdjust="spacingAndGlyphs">(Default&lt;&lt;Default&gt;_...</text>
<path d="M474.6,110.6 L470.4,115" stroke="#3a8cc0" stroke-width="2.2" stroke-linecap="round"/><circle cx="477.8" cy="107.3" r="4.3" fill="#e4ecf2" stroke="#6f7680" stroke-width="1"/><path d="M477.8,104.4 V105.8 M477.8,108.8 V110.2 M474.9,107.3 H476.3 M479.3,107.3 H480.7" stroke="#555" stroke-width="0.9"/>
<rect x="490.4" y="103.2" width="10.6" height="9.6" fill="none" stroke="#555" stroke-width="0.8" stroke-dasharray="1.6 1.2"/><path d="M491.6,110.8 L487.6,115" stroke="#3a8cc0" stroke-width="2.2" stroke-linecap="round"/><circle cx="494.6" cy="107.6" r="4.3" fill="#e9eff4" stroke="#6f7680" stroke-width="1"/>
<path d="M507,112.6 L514.8,104.4 L518.4,103.4 L518.8,106.6 L511.4,115 Z" fill="#e2e6ea" stroke="#7a808a" stroke-width="0.8" stroke-linejoin="round"/><path d="M518.6,112 H513.6 M515.6,109.8 L513.2,112 L515.6,114.2" fill="none" stroke="#2e7fae" stroke-width="1.4"/>
<path d="M524.8,106 C527,103.6 530.4,103.4 531.8,104.6 V113.8 C530,113 527,113.4 524.8,115.4 Z" fill="#5a9cc8" stroke="#3a4550" stroke-width="0.8" stroke-linejoin="round"/><path d="M531.8,104.6 C534,103.2 536.4,103.4 537.6,104.4 V113 C536,112.4 534,112.8 531.8,113.8" fill="#9aa2aa" stroke="#3a4550" stroke-width="0.8" stroke-linejoin="round"/><path d="M533.6,106 V112.2" stroke="#3a78a8" stroke-width="1.6"/>
<path d="M543,112.8 L550.6,104.6 L554.2,103.6 L554.6,106.8 L547.2,115.2 Z" fill="#e2e6ea" stroke="#7a808a" stroke-width="0.8" stroke-linejoin="round"/><path d="M549.6,103 L552.4,103.2 L550.6,105.6 L552,105.8 L546.4,110 L548,106.8 L546.6,106.6 Z" fill="#f0a020" stroke="#d8701c" stroke-width="0.4"/><text x="549.6" y="116" style="font-family:'Liberation Serif',serif;font-size:8.6px;fill:#2e7fae;font-weight:bold">A</text>
<path d="M561.8,107 L565.4,103.4 H574 V112 L570.4,115.6 H561.8 Z" fill="#f2f2f2" stroke="#555" stroke-width="0.8" stroke-linejoin="round"/><path d="M565.4,103.4 V107 M574,107.6 H570.6 M569.8,103.4 V107 M574,112 L570.4,115.6" stroke="#555" stroke-width="0.7" fill="none"/><rect x="561.8" y="107" width="8.6" height="8.6" fill="#5aa4d4" stroke="#2a6a9a" stroke-width="0.8"/>
<path fill="#80848e" d="M579.8,108.8 L583.4,108.8 L581.6,110.9 Z"/>
<path d="M591,105 L596.6,102.6 L602.8,104.4 V113.2 L596.8,115.6 L591,113.6 Z" fill="#fbfbfb" stroke="#6a7078" stroke-width="0.8" stroke-linejoin="round"/><path d="M591,105 L596.8,106.8 V115.6 L591,113.6 Z" fill="url(#gB2)" stroke="#2a6a9a" stroke-width="0.7" stroke-linejoin="round"/><path d="M596.8,106.8 L602.8,104.4" stroke="#6a7078" stroke-width="0.7"/>
<path fill="#80848e" d="M608.0,108.8 L611.6,108.8 L609.8,110.9 Z"/>
<path d="M619,109.6 C622,104.6 628.4,104.6 631.4,109.6 C628.4,114.2 622,114.2 619,109.6 Z" fill="#d6dae0" stroke="#8a9098" stroke-width="0.8"/><circle cx="625.2" cy="109.4" r="2.7" fill="#4a4f58"/><path d="M625.2,106 V114.6" stroke="#3a3f48" stroke-width="0.8"/>
<path fill="#80848e" d="M636.7,108.8 L640.3,108.8 L638.5,110.9 Z"/>
<circle cx="651.6" cy="107.6" r="5.5" fill="#e9c22e"/><path d="M651.6,107.6 L651.6,102.1 A5.5,5.5 0 0 0 646.1,107.6 Z" fill="#3a78c8"/><path d="M651.6,107.6 L646.1,107.6 A5.5,5.5 0 0 0 651.6,113.1 Z" fill="#3fa43a"/><path d="M651.6,107.6 L651.6,102.1 A5.5,5.5 0 0 1 657.1,107.6 Z" fill="#d8342c"/><circle cx="651.6" cy="107.6" r="5.5" fill="url(#gSh)"/><path d="M658.6,107.4 L660,108.8 L653.4,115.2 L651.2,116 L652,113.8 Z" fill="#e8b040" stroke="#8a5a1c" stroke-width="0.5"/>
<circle cx="671" cy="107.4" r="5.3" fill="#e9c22e"/><path d="M671,107.4 L671,102.1 A5.3,5.3 0 0 0 665.7,107.4 Z" fill="#3a78c8"/><path d="M671,107.4 L665.7,107.4 A5.3,5.3 0 0 0 671,112.7 Z" fill="#3fa43a"/><path d="M671,107.4 L671,102.1 A5.3,5.3 0 0 1 676.3,107.4 Z" fill="#d8342c"/><circle cx="671" cy="107.4" r="5.3" fill="url(#gSh)"/><path d="M664.2,116 L666,112.6 H676 L677.8,116 Z" fill="#f2f2f2" stroke="#333" stroke-width="0.6"/><path d="M665.2,114.4 H667.6 V116 H665 Z M669.6,114.4 H672 V116 H669.6 Z M674,114.4 H676.8 L677.6,116 H674 Z M667.4,112.8 H669.6 V114.4 H667.4 Z M672,112.8 H674 V114.4 H672 Z" fill="#222"/>
<path fill="#80848e" d="M683.2,108.8 L686.8,108.8 L685.0,110.9 Z"/>
<rect x="693.8" y="103.6" width="12" height="8.2" rx="0.8" fill="#e6e8ea" stroke="#7a7f86" stroke-width="1"/><path d="M699.8,111.8 V114.2 M696.6,114.8 H703" stroke="#6a6f76" stroke-width="1.2"/>
<path fill="#80848e" d="M711.6,108.8 L715.2,108.8 L713.4,110.9 Z"/>
<g fill="none" stroke="#7b808c" stroke-width="0.9"><rect x="931.6" y="89.6" width="8.4" height="8.6"/><rect x="950.4" y="89.6" width="8.4" height="8.6"/><rect x="986.4" y="92.6" width="6.8" height="6"/><path d="M989.8,92.4 V89.4 H996.6 V95.6 H993.4"/><path d="M1006.2,90.2 L1013,97.2 M1013,90.2 L1006.2,97.2"/></g><path d="M933.6,94 L936,92 V96 Z M956.8,94 L954.4,92 V96 Z" fill="#7b808c"/><path d="M934.6,92 V96 M955.8,92 V96" stroke="#7b808c" stroke-width="0.7"/><rect x="969" y="96.6" width="7" height="1.4" fill="#7b808c"/>
<path d="M965.4,107.7 H951.4 V119.6 Q951.4,124.8 956.6,124.8 H965" fill="none" stroke="#a9c1d3" stroke-width="1.3"/><path d="M966.6,125 L972.6,118.2 L973.2,122.2 C976.6,122.6 980,121.2 981.8,118.4 C982.4,124 978.8,128 973.2,128.2 L972.8,131.6 Z" fill="#b3c9da" stroke="#9db5c8" stroke-width="0.8" stroke-linejoin="round"/>
<path d="M984.8,131 L998,144 M998,131 L984.8,144" stroke="#d4a9af" stroke-width="4.6" stroke-linecap="butt"/>
<rect x="1004.8" y="119.2" width="19.2" height="152.8" fill="#dcdcdc" stroke="#adadad" stroke-width="0.9"/>
<rect x="1005.3" y="119.6" width="18.7" height="16" fill="#fbfbfb"/>
<rect x="1005.2" y="135.3" width="18.8" height="1" fill="#bcbcbc"/>
<rect x="1005.2" y="152.3" width="18.8" height="1" fill="#bcbcbc"/>
<rect x="1005.2" y="169.1" width="18.8" height="1" fill="#bcbcbc"/>
<rect x="1005.2" y="186.9" width="18.8" height="1" fill="#bcbcbc"/>
<rect x="1005.2" y="203.5" width="18.8" height="1" fill="#bcbcbc"/>
<rect x="1005.2" y="220.4" width="18.8" height="1" fill="#bcbcbc"/>
<rect x="1005.2" y="237.5" width="18.8" height="1" fill="#bcbcbc"/>
<rect x="1005.2" y="254.5" width="18.8" height="1" fill="#bcbcbc"/>

<circle cx="1013.8" cy="127.6" r="6.7" fill="url(#gGlobe)"/><path d="M1012.4,125.2 L1016.6,127.6 L1012.4,130 Z" fill="none" stroke="#9cc6e6" stroke-width="0.8"/><circle cx="1013.8" cy="127.6" r="4.9" fill="none" stroke="#7fb2d8" stroke-width="0.5" stroke-dasharray="1.2 2.6"/>
<path d="M1009.6,144.6 V150.4 H1018.2 V144.6" fill="#fafafa" stroke="#444" stroke-width="0.9"/><path d="M1012.4,150.4 V147 C1012.4,145.8 1015.4,145.8 1015.4,147 V150.4" fill="none" stroke="#444" stroke-width="0.8"/><path d="M1008.2,145 L1013.9,139.6 L1019.6,145" fill="none" stroke="#27638f" stroke-width="1.8"/>
<path d="M1009.4,158.4 L1011.4,156.8 L1013.2,158 L1015,156.6 L1016.8,157.8 L1018.4,156.8 V164.6 L1016,166.8 L1014.2,165.6 L1012.6,166.8 L1009.4,164.6 Z" fill="#f0f0f0" stroke="#555" stroke-width="0.8" stroke-linejoin="round"/><path d="M1012.6,159 V166.6 M1014.4,158.8 V165.6 M1016.2,158.6 V166.6" stroke="#555" stroke-width="0.7"/>
<path d="M1008.2,183.4 V173.6 H1012.4 L1013.6,175.2 H1018.4 V177.4" fill="#ececec" stroke="#444" stroke-width="0.9" stroke-linejoin="round"/><path d="M1008.2,183.6 L1011,177.2 H1020.6 L1018,183.6 Z" fill="#fafafa" stroke="#444" stroke-width="0.9" stroke-linejoin="round"/>
<rect x="1007.8" y="190.4" width="12.4" height="10.6" rx="1" fill="#efefef" stroke="#555" stroke-width="0.8"/><path d="M1009.4,192.4 H1016 V194.4 H1013.8 V197.4 H1016 V199.4 H1009.4 V197.4 H1011.6 V194.4 H1009.4 Z" fill="#e4b81e" stroke="#9a7b14" stroke-width="0.4"/><path d="M1018,192.4 V199.4" stroke="#333" stroke-width="1"/>
<circle cx="1013.9" cy="212.4" r="5.8" fill="#e9c22e"/><path d="M1013.9,212.4 L1013.9,206.6 A5.8,5.8 0 0 0 1008.1,212.4 Z" fill="#3a78c8"/><path d="M1013.9,212.4 L1008.1,212.4 A5.8,5.8 0 0 0 1013.9,218.2 Z" fill="#3fa43a"/><path d="M1013.9,212.4 L1013.9,206.6 A5.8,5.8 0 0 1 1019.7,212.4 Z" fill="#d8342c"/><circle cx="1013.9" cy="212.4" r="5.8" fill="url(#gSh)"/>
<rect x="1007.8" y="223.6" width="12.2" height="12.4" rx="0.8" fill="#f4f4f4" stroke="#56626e" stroke-width="1"/><rect x="1008" y="223.8" width="11.8" height="2.4" fill="#3a86b8"/><rect x="1009.2" y="227.6" width="2.2" height="1.8" fill="#3a86b8"/><rect x="1009.2" y="230.4" width="2.2" height="1.8" fill="#3a86b8"/><rect x="1009.2" y="233" width="2.2" height="1.8" fill="#3a86b8"/><path d="M1012.6,228.5 H1018.6 M1012.6,231.3 H1018.6 M1012.6,233.9 H1018.6" stroke="#56626e" stroke-width="0.9"/>
<circle cx="1013.8" cy="246.8" r="6" fill="#2f7fd0" stroke="#8a8f98" stroke-width="0.7"/><path d="M1009.2,245.6 C1010.4,242.4 1015,241.6 1017.2,243.8 L1018.4,242.6 V246.4 H1014.6 L1015.8,245.2 C1014.4,244 1011.8,244.2 1010.8,246 Z M1018.4,248 C1017.2,251.2 1012.6,252 1010.4,249.8 L1009.2,251 V247.2 H1013 L1011.8,248.4 C1013.2,249.6 1015.8,249.4 1016.8,247.6 Z" fill="#f4f4f4" stroke="#777" stroke-width="0.3"/>
<path d="M1007.8,259.4 H1016 V265 H1011.4 L1009.4,267 V265 H1007.8 Z" fill="#4a9acb" stroke="#27638f" stroke-width="0.7" stroke-linejoin="round"/><path d="M1012.4,262.6 H1020.4 V267.6 H1018.8 V269.4 L1016.8,267.6 H1012.4 Z" fill="#f2f2f2" stroke="#555" stroke-width="0.7" stroke-linejoin="round"/>
</svg>
<!-- ======= BOTTOM ======= -->
<svg class="abs" style="left:0;top:584px" width="1024" height="56" viewBox="0 584 1024 56">
<style>.b{font-family:"Liberation Sans",sans-serif;font-size:9.2px;fill:#1e1e1e}.w{font-family:"Liberation Sans",sans-serif;font-size:9px;fill:#f2f2f2}</style>
<rect x="0" y="585" width="1024" height="12" fill="#fdfdfd"/>
<rect x="0" y="585" width="1024" height="1" fill="#a9acb4"/>
<rect x="1021.4" y="585.6" width="1" height="10.8" fill="#8e8e8e"/><rect x="1022.4" y="585.6" width="1.6" height="10.8" fill="#e4e4e4"/>
<rect x="0" y="596" width="1024" height="14" fill="#f4f4f4"/>
<rect x="0" y="596" width="1024" height="0.8" fill="#dcdcdc"/>
<rect x="2.8" y="586" width="46.4" height="10.4" fill="#c6c6c6" stroke="#a8a8a8" stroke-width="0.8"/>
<path d="M10.2,588.4 L6.8,591.2 L10.2,594 Z" fill="#e6e6e6"/>
<rect x="5.3999999999999995" y="588.4" width="1" height="5.6" fill="#e6e6e6"/>
<path d="M21.8,588.4 L18.4,591.2 L21.8,594 Z" fill="#e6e6e6"/>
<path d="M30.2,588.4 L33.6,591.2 L30.2,594 Z" fill="#e6e6e6"/>
<path d="M41.8,588.4 L45.199999999999996,591.2 L41.8,594 Z" fill="#e6e6e6"/>
<rect x="45.6" y="588.4" width="1" height="5.6" fill="#e6e6e6"/>
<rect x="14.4" y="586" width="0.8" height="10.4" fill="#b8b8b8"/>
<rect x="26" y="586" width="0.8" height="10.4" fill="#b8b8b8"/>
<rect x="37.6" y="586" width="0.8" height="10.4" fill="#b8b8b8"/>
<rect x="49.2" y="585.4" width="41" height="11" fill="#ffffff"/>
<text class="b" x="58.6" y="593.7" textLength="24.6" lengthAdjust="spacingAndGlyphs" style="font-weight:bold;fill:#111">Model</text>
<rect x="90.2" y="586" width="48" height="10.4" fill="#dcdcdc" stroke="#b0b0b0" stroke-width="0.8"/>
<text class="b" x="97.2" y="593.7" textLength="33.3" lengthAdjust="spacingAndGlyphs">3D Views</text>
<rect x="138.2" y="586" width="76.1" height="10.4" fill="#dcdcdc" stroke="#b0b0b0" stroke-width="0.8"/>
<text class="b" x="145.2" y="593.7" textLength="56.2" lengthAdjust="spacingAndGlyphs">Motion Study 1</text>
<text class="b" x="619" y="606.8" textLength="22.1" lengthAdjust="spacingAndGlyphs">0.46in</text>
<text class="b" x="658.9" y="606.8" textLength="24.4" lengthAdjust="spacingAndGlyphs">-1.46in</text>
<text class="b" x="688.3" y="606.8" textLength="21.4" lengthAdjust="spacingAndGlyphs">1.00in</text>
<text class="b" x="723.9" y="606.8" textLength="48.7" lengthAdjust="spacingAndGlyphs">Fully Defined</text>
<text class="b" x="785.8" y="606.8" textLength="66.7" lengthAdjust="spacingAndGlyphs">Editing 3DSketch1</text>
<rect x="871" y="599.6" width="4.2" height="8.4" rx="1.2" fill="#4a4030"/><circle cx="873.1" cy="601.8" r="1.3" fill="#e2302a"/><circle cx="873.1" cy="605.6" r="1.3" fill="#2fa32a"/>
<rect x="880" y="598" width="0.8" height="11" fill="#dcdcdc"/>
<path d="M885.4,605.2 L888.4,599.6 L891.4,605.2 Z" fill="#f0a020" stroke="#c86a14" stroke-width="0.5"/><path d="M890.6,603 L893.2,600.4" stroke="#222" stroke-width="1"/><path d="M894.4,599.2 L891.6,599.8 L893.8,602 Z" fill="#222"/><path d="M885.6,607.2 H893.6" stroke="#2e7fae" stroke-width="1.4" stroke-dasharray="1.6 0.8"/>
<text class="b" x="955.3" y="606.9" textLength="11.2" lengthAdjust="spacingAndGlyphs" style="fill:#333">IPS</text>
<path d="M987.2,605.2 L990.6,605.2 L988.9,603.4 Z" fill="#333"/>
<path d="M1010,602.6 L1014,599.8 L1021,602 L1019.4,606.6 L1015.4,608.8 L1010.6,606 Z" fill="#e2e2e2" stroke="#555" stroke-width="0.8" stroke-linejoin="round"/><path d="M1013,602.4 L1014.4,604.6 L1016,602.6 L1017.2,604.8" fill="none" stroke="#555" stroke-width="0.7"/>
<rect x="0" y="609.8" width="1024" height="30.2" fill="#eeeeee"/>
<rect x="2.3" y="609.8" width="1021.7" height="28.2" fill="#0a0a0a"/>
<rect x="176.2" y="609.8" width="33" height="28.2" fill="#2b2b2b"/>
<path d="M13,620.2 L18.2,619.5 V624 H13 Z M18.9,619.4 L25.3,618.5 V624 H18.9 Z M13,624.7 H18.2 V629.3 L13,628.6 Z M18.9,624.7 H25.3 V630.2 L18.9,629.4 Z" fill="#f4f4f4"/>
<circle cx="55.6" cy="622.2" r="3.6" fill="none" stroke="#f0f0f0" stroke-width="1.1"/><path d="M53,625 L48.2,629.8" stroke="#f0f0f0" stroke-width="1.2"/>
<rect x="83.2" y="621" width="7" height="7.4" fill="none" stroke="#f0f0f0" stroke-width="1"/><path d="M81.4,619.2 V620.8 M81.4,628.6 V630.2 M81.4,619.8 H92 M81.4,629.6 H92 M92,619.2 V620.8 M92,628.6 V630.2 M93.4,622 V627.6" stroke="#f0f0f0" stroke-width="1" fill="none"/>
<path d="M130.4,625.4 H120.6 C120.8,629.2 126.6,629.8 128.4,627 L130.6,627.2 C129.4,631.4 123,632.6 119.4,629.4 C115.6,625.8 118,618.4 124,618 C128.6,617.8 131.2,621.6 130.4,625.4 Z M120.8,623 H127.6 C127.2,619.8 121.4,619.8 120.8,623 Z" fill="#3aa0e8"/><path d="M117,630.6 C114.6,627.4 120,619 128.2,616.4 C131.2,615.6 132.6,617 130.8,619.6" fill="none" stroke="#f0c030" stroke-width="1.3"/>
<path d="M150.4,619.4 H156.4 L157.8,621 H166 V630.6 H150.4 Z" fill="#e8b93c"/><rect x="150.4" y="622.4" width="15.6" height="8.4" fill="#f6d978"/><rect x="154.6" y="626" width="7.2" height="4.8" fill="#3a96dc"/><rect x="156.4" y="628.2" width="3.6" height="2.6" fill="#f6d978"/>
<path d="M184.4,619.6 L192.2,617 L200.2,619.6 V628.6 L192.2,631.6 L184.4,628.6 Z" fill="#d42a2a"/><path d="M184.4,619.6 L192.2,622.2 L200.2,619.6" fill="none" stroke="#f08080" stroke-width="0.6"/>
<text class="w" x="186.2" y="627" textLength="12.4" lengthAdjust="spacingAndGlyphs" style="font-weight:bold;font-size:7.4px;fill:#fff">SW</text>
<text class="w" x="189.4" y="632.2" textLength="11.2" lengthAdjust="spacingAndGlyphs" style="font-weight:bold;font-size:5.6px;fill:#fff">2020</text>
<rect x="110" y="636.6" width="27" height="1.6" fill="#76b9ed"/>
<rect x="144" y="636.6" width="27" height="1.6" fill="#76b9ed"/>
<rect x="176.2" y="636.6" width="33.0" height="1.6" fill="#76b9ed"/>
<path d="M893.4,626.2 L897.7,621.8 L902,626.2" fill="none" stroke="#f0f0f0" stroke-width="1.1"/>
<rect x="911" y="620.4" width="9.4" height="6" fill="none" stroke="#f0f0f0" stroke-width="1"/><path d="M915.6,626.6 V628.6 M912.4,629 H918.8 M909,620.2 V625 M909,621.6 H911" stroke="#f0f0f0" stroke-width="1" fill="none"/>
<path d="M926.2,623.2 H928.2 L930.8,620.6 V629 L928.2,626.4 H926.2 Z" fill="none" stroke="#f0f0f0" stroke-width="0.9" stroke-linejoin="round"/><path d="M932.6,622.8 C933.6,624 933.6,625.6 932.6,626.8 M934.4,621.4 C936,623.4 936,626.2 934.4,628.2 M936.2,620.2 C938.4,622.8 938.4,626.8 936.2,629.4" fill="none" stroke="#f0f0f0" stroke-width="0.8"/>
<text class="w" x="946.5" y="620.5" textLength="33.3" lengthAdjust="spacingAndGlyphs">11:32 PM</text>
<text class="w" x="944.6" y="632.9" textLength="36.4" lengthAdjust="spacingAndGlyphs">9/27/2020</text>
<path d="M994.4,618.6 H1005.8 V627.4 H1001.6 L1000.1,629.4 L998.6,627.4 H994.4 Z" fill="none" stroke="#f0f0f0" stroke-width="1" stroke-linejoin="round"/>
</svg>
<div class="abs" style="left:0;top:0;width:1.8px;height:103.3px;background:#a8a8a8"></div>
</body>
</html>
